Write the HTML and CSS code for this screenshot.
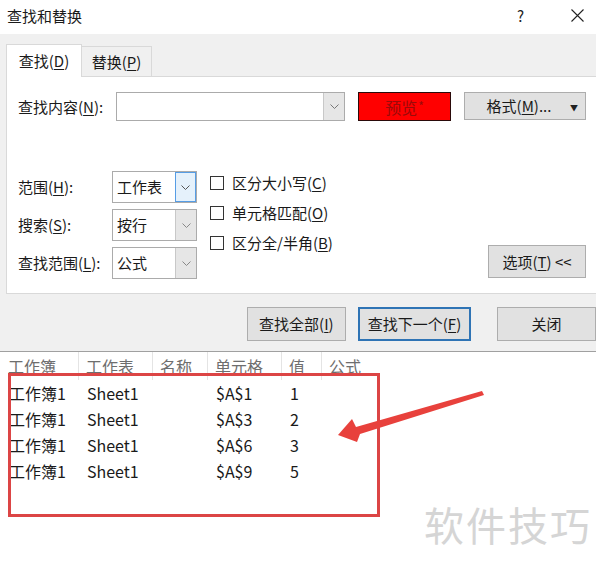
FILE: index.html
```html
<!DOCTYPE html>
<html lang="zh">
<head>
<meta charset="utf-8">
<title>查找和替换</title>
<link rel="stylesheet" href="styles.css">
</head>
<body>
<div class="page">
  <div class="titlebar">
    <span class="title">查找和替换</span>
    <span class="help">?</span>
    <span class="close"><svg width="13" height="13" viewBox="0 0 13 13"><path d="M0.5 0.5 L12.5 12.5 M12.5 0.5 L0.5 12.5" stroke="#222" stroke-width="1.1" fill="none"/></svg></span>
  </div>

  <div class="dialog">
    <div class="tabs">
      <div class="tab active">查找(<u>D</u>)</div>
      <div class="tab">替换(<u>P</u>)</div>
    </div>
    <div class="panel">
      <div class="inner">
        <div class="row-find">
          <span class="lbl-find">查找内容(<u>N</u>):</span>
          <div class="combo">
            <div class="combo-input"></div>
            <div class="drop"><svg width="9" height="5" viewBox="0 0 9 5"><path d="M0.5 0.5 L4.5 4.5 L8.5 0.5" stroke="#777" fill="none"/></svg></div>
          </div>
          <div class="preview">预览<span class="star">*</span></div>
          <div class="btn format"><span>格式(<u>M</u>)...</span><span class="caret">▼</span></div>
        </div>

        <div class="row-opts">
          <div class="selects">
            <span class="lbl">范围(<u>H</u>):</span>
            <div class="select"><span class="val">工作表</span><div class="drop hot"><svg width="9" height="5" viewBox="0 0 9 5"><path d="M0.5 0.5 L4.5 4.5 L8.5 0.5" stroke="#555" fill="none"/></svg></div></div>
            <span class="lbl">搜索(<u>S</u>):</span>
            <div class="select"><span class="val">按行</span><div class="drop"><svg width="9" height="5" viewBox="0 0 9 5"><path d="M0.5 0.5 L4.5 4.5 L8.5 0.5" stroke="#888" fill="none"/></svg></div></div>
            <span class="lbl">查找范围(<u>L</u>):</span>
            <div class="select"><span class="val">公式</span><div class="drop"><svg width="9" height="5" viewBox="0 0 9 5"><path d="M0.5 0.5 L4.5 4.5 L8.5 0.5" stroke="#888" fill="none"/></svg></div></div>
          </div>
          <div class="checks">
            <div class="check"><span class="box"></span><span>区分大小写(<u>C</u>)</span></div>
            <div class="check"><span class="box"></span><span>单元格匹配(<u>O</u>)</span></div>
            <div class="check"><span class="box"></span><span>区分全/半角(<u>B</u>)</span></div>
          </div>
          <div class="btn options">选项(<u>T</u>) &lt;&lt;</div>
        </div>
      </div>
    </div>

    <div class="actions">
      <div class="btn act w100">查找全部(<u>I</u>)</div>
      <div class="btn act w115 default">查找下一个(<u>F</u>)</div>
      <div class="btn act w100 close-btn">关闭</div>
    </div>
  </div>

  <div class="results">
    <div class="rrow head">
      <span>工作簿</span><span>工作表</span><span>名称</span><span>单元格</span><span>值</span><span>公式</span>
    </div>
    <div class="rrow"><span>工作簿1</span><span>Sheet1</span><span></span><span>$A$1</span><span>1</span><span></span></div>
    <div class="rrow"><span>工作簿1</span><span>Sheet1</span><span></span><span>$A$3</span><span>2</span><span></span></div>
    <div class="rrow"><span>工作簿1</span><span>Sheet1</span><span></span><span>$A$6</span><span>3</span><span></span></div>
    <div class="rrow"><span>工作簿1</span><span>Sheet1</span><span></span><span>$A$9</span><span>5</span><span></span></div>
  </div>

  <div class="highlight"></div>
  <svg class="arrow" width="596" height="571" viewBox="0 0 596 571">
    <polygon points="338,435 352,419 356,427 482,391 484,395 360,434 357,442" fill="#e8413c"/>
  </svg>
  <div class="watermark">软件技巧</div>
</div>
</body>
</html>
```

FILE: styles.css
```css
* { box-sizing: border-box; }
html, body { margin: 0; padding: 0; }
body {
  width: 596px;
  height: 571px;
  overflow: hidden;
  background: #fff;
  font-family: "Noto Sans CJK SC", "Noto Sans", sans-serif;
  font-size: 15px;
  color: #1a1a1a;
}
u { text-decoration: underline; text-underline-offset: 2px; }
.page { position: relative; width: 596px; height: 571px; overflow: hidden; }

.titlebar {
  height: 34px;
  display: flex;
  align-items: center;
  padding-left: 7px;
  background: #fff;
}
.title { font-size: 15px; line-height: 20px; margin-top: -2px; }
.help { margin-left: auto; margin-right: 47px; font-size: 15px; line-height: 20px; margin-top: -3px; color: #222; }
.close { width: 13px; height: 13px; margin-right: 12px; margin-top: -4px; display: flex; }

.dialog {
  height: 318px;
  background: #f0f0f0;
  border-bottom: 1px solid #a0a0a0;
  padding-bottom: 10px;
}
.tabs {
  height: 42px;
  display: flex;
  align-items: flex-end;
  padding-left: 6px;
}
.tab {
  height: 30px;
  width: 70px;
  border: 1px solid #d9d9d9;
  border-left: none;
  border-bottom: none;
  display: flex;
  align-items: center;
  justify-content: center;
  font-size: 15px;
  line-height: 20px;
  padding-top: 1px;
}
.tab.active {
  height: 33px;
  width: 76px;
  border-left: 1px solid #d9d9d9;
  background: #fff;
  margin-bottom: -1px;
  position: relative;
  z-index: 1;
  padding-top: 0;
}
.panel {
  margin-left: 6px;
  width: 600px;
  height: 218px;
  background: #fff;
  border: 1px solid #d9d9d9;
  padding: 15px 0 0 11px;
}
.inner { width: 568px; }

.row-find { display: flex; align-items: center; height: 29px; }
.lbl-find { width: 98px; line-height: 20px; }
.combo {
  width: 229px;
  height: 29px;
  border: 1px solid #ababab;
  display: flex;
}
.combo-input { flex: 1; }
.drop {
  width: 21px;
  height: 100%;
  background: #e6e6e6;
  border-left: 1px solid #c8c8c8;
  display: flex;
  align-items: center;
  justify-content: center;
}
.drop.hot { background: #e5f1fb; border: 1px solid #569de5; }
.preview {
  margin-left: 13px;
  width: 93px;
  height: 29px;
  background: #ff0000;
  border: 1px solid #2a0a0a;
  color: #9a0a0a;
  display: flex;
  align-items: center;
  justify-content: center;
  font-size: 16px;
  line-height: 20px;
}
.star { font-size: 12px; margin-left: 1px; margin-top: -2px; }
.btn {
  background: #e1e1e1;
  border: 1px solid #adadad;
  display: flex;
  align-items: center;
  justify-content: center;
  font-size: 15px;
  line-height: 20px;
}
.format {
  margin-left: 13px;
  width: 122px;
  height: 28px;
  align-self: flex-start;
  position: relative;
  padding-right: 12px;
}
.caret { position: absolute; right: 7px; top: 5px; font-size: 8px; color: #222; }

.row-opts { display: flex; margin-top: 50px; height: 108px; }
.selects {
  display: grid;
  grid-template-columns: 94px 85px;
  grid-auto-rows: 32px;
  row-gap: 6px;
  align-items: center;
}
.lbl { line-height: 20px; }
.select {
  height: 32px;
  border: 1px solid #ababab;
  display: flex;
  align-items: stretch;
  background: #fff;
}
.select .val { flex: 1; display: flex; align-items: center; padding-left: 4px; line-height: 20px; }
.select .drop { height: auto; }

.checks { margin-left: 13px; margin-top: -3px; display: flex; flex-direction: column; }
.check { height: 30px; display: flex; align-items: center; line-height: 20px; }
.box {
  width: 14px; height: 14px;
  border: 1px solid #333;
  background: #fff;
  margin-right: 8px;
}
.options {
  margin-left: auto;
  margin-top: auto;
  margin-bottom: 1px;
  width: 98px;
  height: 33px;
}

.actions { display: flex; padding-left: 247px; margin-top: 13px; }
.act { height: 34px; }
.w100 { width: 100px; }
.w115 { width: 115px; margin-left: 12px; }
.default { border: 2px solid #2f74b5; }
.close-btn { margin-left: 26px; }

.rrow {
  display: grid;
  grid-template-columns: 79px 74px 55px 74px 40px 1fr;
  height: 26px;
  align-items: center;
  font-size: 16px;
  line-height: 22px;
  color: #1a1a1a;
}
.rrow span { padding-left: 8px; white-space: nowrap; }
.rrow span:first-child { padding-left: 9px; }
.rrow.head { height: 28px; color: #6e6e6e; }
.rrow.head span { border-right: 1px solid #e4e4e4; height: 28px; display: flex; align-items: center; padding-left: 7px; }
.rrow.head span:first-child { padding-left: 8px; }
.rrow.head span:last-child { border-right: none; }

.highlight {
  position: absolute;
  left: 8px;
  top: 373px;
  width: 372px;
  height: 144px;
  border: 3px solid #dc4545;
}
.arrow { position: absolute; left: 0; top: 0; }
.watermark {
  position: absolute;
  left: 424px;
  top: 496px;
  font-size: 40px;
  line-height: 56px;
  letter-spacing: 2px;
  color: #d5d5d5;
}
```
